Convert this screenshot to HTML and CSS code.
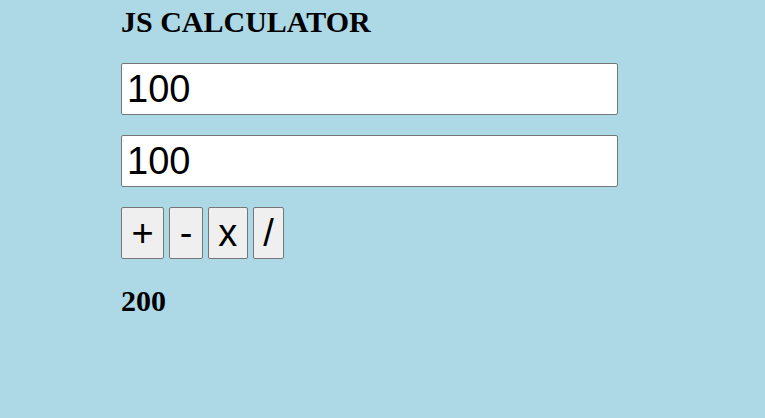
FILE: index.html
```html
<!DOCTYPE html>
<html>
<head>
<meta charset="utf-8">
<link rel="stylesheet" href="styles.css">
</head>
<body>
<div class="calc">
  <h2 class="title">JS CALCULATOR</h2>
  <input class="num" type="text" value="100">
  <input class="num" type="text" value="100">
  <div class="ops">
    <button class="op">+</button>
    <button class="op">-</button>
    <button class="op">x</button>
    <button class="op">/</button>
  </div>
  <div class="result">200</div>
</div>
</body>
</html>
```
FILE: styles.css
```css
html, body {
  margin: 0;
  padding: 0;
  background: #add8e6;
  height: 100%;
}
.calc {
  padding: 7px 0 0 121px;
  display: flex;
  flex-direction: column;
  align-items: flex-start;
}
.title {
  margin: 0 0 26px 0;
  font-family: "Liberation Serif", "Times New Roman", serif;
  font-weight: bold;
  font-size: 30px;
  line-height: 30px;
  color: #000;
}
.num {
  box-sizing: border-box;
  width: 497px;
  height: 52px;
  margin: 0 0 20px 0;
  padding: 0 5px;
  border: 1px solid #767676;
  border-radius: 2px;
  background: #fff;
  font-family: "Liberation Sans", Arial, sans-serif;
  font-size: 38px;
  color: #000;
  outline: none;
}
.ops {
  display: flex;
  gap: 5px;
  margin-top: 0;
}
.op {
  box-sizing: border-box;
  height: 52px;
  padding: 0 9.5px;
  border: 1px solid #767676;
  border-radius: 2px;
  background: #efefef;
  font-family: "Liberation Sans", Arial, sans-serif;
  font-size: 38px;
  line-height: 1;
  color: #000;
}
.result {
  margin-top: 27px;
  font-family: "Liberation Serif", "Times New Roman", serif;
  font-weight: bold;
  font-size: 30px;
  line-height: 30px;
  color: #000;
}
```
